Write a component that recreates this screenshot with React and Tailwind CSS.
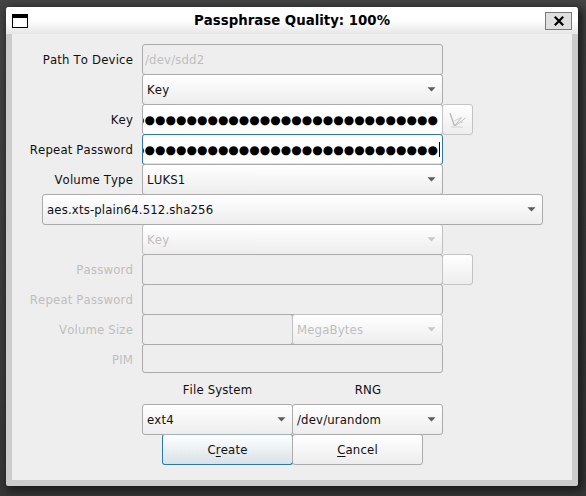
const FONT = "font-['DejaVu_Sans_Condensed','DejaVu_Sans',sans-serif] [font-kerning:none]";

const DOTS = '●'.repeat(29);

function Row({ label, muted, children }) {
  return (
    <div className="flex h-[30px]">
      <div className={`w-[121px] shrink-0 text-right leading-[31px] ${muted ? 'text-[#bebebe]' : ''}`}>{label}</div>
      <div className="ml-[9px] flex">{children}</div>
    </div>
  );
}

function Arrow({ muted }) {
  return (
    <svg width="9" height="5" viewBox="0 0 9 5" className="shrink-0" fill={muted ? '#c8c8c8' : '#5c5c5c'}>
      <path d="M0.5 0.3H8.5L4.5 4.6Z" />
    </svg>
  );
}

function Combo({ text, muted, className }) {
  return (
    <div
      className={`flex h-[31px] shrink-0 items-center justify-between rounded-[3px] border bg-linear-to-b from-white to-[#ededed] pr-[6px] pl-1 ${muted ? 'border-[#c0c0c0] text-[#bebebe]' : 'border-[#ababab]'} ${className}`}
    >
      <span className="leading-[29px]">{text}</span>
      <Arrow muted={muted} />
    </div>
  );
}

function Field({ children, className = 'w-[301px] h-[31px]' }) {
  return (
    <div className={`shrink-0 rounded-[3px] border border-[#ababab] bg-[#eeeeee] pl-[2px] leading-[29px] text-[#bebebe] ${className}`}>
      {children}
    </div>
  );
}

function Secret({ focused }) {
  return (
    <div
      className={`flex h-[31px] w-[301px] shrink-0 items-center justify-end overflow-hidden rounded-[3px] border bg-white ${focused ? 'border-[#2878a8] pr-[2px] shadow-[inset_0_-1px_0_#d3e4ee]' : 'border-[#ababab] pr-[3px]'}`}
    >
      <span className="pt-px pr-px font-['DejaVu_Sans'] text-[12px] leading-[29px] tracking-[0.01px] whitespace-nowrap text-black">{DOTS}</span>
      {focused && <span className="h-[15px] w-px shrink-0 bg-black" />}
    </div>
  );
}

function ToolButton({ children }) {
  return (
    <div className="-ml-px flex h-[31px] w-[31px] items-center justify-center rounded-[3px] border border-[#c4c4c4] bg-linear-to-b from-white to-[#ededed]">
      {children}
    </div>
  );
}

export default function App() {
  return (
    <div className={`h-[496px] w-[586px] overflow-hidden bg-linear-to-b from-[#444444] to-[#363636] pt-[7px] pl-[6px] text-[13px] tracking-[0.16px] text-[#101010] ${FONT}`}>
      <div className="flex h-[479px] w-[572px] flex-col rounded-t-[3px] rounded-b-[2px] bg-[#cccccc] shadow-[3px_3px_9px_2px_#1c1c1c]">
        <div className="flex h-[27px] shrink-0 items-center rounded-t-[3px] bg-linear-to-b from-white from-50% to-[#e6e6e6] px-[6px]">
          <div className="h-[14px] w-4 border border-t-4 border-black bg-white" />
          <div className="flex-1 pl-[11px] text-center font-['DejaVu_Sans'] text-[13.33px] leading-[27px] font-bold tracking-normal text-black">
            Passphrase Quality: 100%
          </div>
          <div className="mt-px flex h-[18px] w-[27px] items-center justify-center border border-[#787878] bg-[#e0e0e0]">
            <svg width="10" height="10" viewBox="0 0 10 10" stroke="#000" strokeWidth="2.2">
              <path d="M0.8 0.8L9.2 9.2M9.2 0.8L0.8 9.2" />
            </svg>
          </div>
        </div>

        <div className="mx-[6px] flex h-[446px] flex-col bg-[#eeeeee] pt-[10px]">
          <Row label="Path To Device">
            <Field>/dev/sdd2</Field>
          </Row>
          <Row label="">
            <Combo text="Key" className="w-[301px]" />
          </Row>
          <Row label="Key">
            <Secret />
            <ToolButton>
              <svg width="17" height="16" viewBox="0 0 17 16" fill="none">
                <path d="M1 1L5.5 14" stroke="#b6b6b6" strokeWidth="1.3" />
                <path d="M5.5 14L12.5 5.5M6 14L16.5 6" stroke="#bebebe" />
                <path d="M5.5 9L12 5.5M8.5 11.5L14 10" stroke="#d2d2d2" />
                <path d="M2 15H14" stroke="#d2d2d2" />
              </svg>
            </ToolButton>
          </Row>
          <Row label="Repeat Password">
            <Secret focused />
          </Row>
          <Row label="Volume Type">
            <Combo text="LUKS1" className="w-[301px]" />
          </Row>
          <div className="z-10 flex h-[30px] pl-[30px]">
            <Combo text="aes.xts-plain64.512.sha256" className="w-[501px]" />
          </div>
          <Row label="" muted>
            <Combo text="Key" muted className="w-[301px]" />
          </Row>
          <Row label="Password" muted>
            <Field />
            <ToolButton />
          </Row>
          <Row label="Repeat Password" muted>
            <Field />
          </Row>
          <Row label="Volume Size" muted>
            <Field className="h-[31px] w-[151px]" />
            <Combo text="MegaBytes" muted className="-ml-px w-[151px]" />
          </Row>
          <Row label="PIM" muted>
            <Field className="h-[29px] w-[301px]" />
          </Row>
          <div className="flex h-[30px] pl-[130px] text-center leading-[31px]">
            <div className="w-[151px]">File System</div>
            <div className="w-[150px]">RNG</div>
          </div>
          <div className="flex h-[30px] pl-[130px]">
            <Combo text="ext4" className="w-[151px]" />
            <Combo text="/dev/urandom" className="-ml-px w-[151px]" />
          </div>
          <div className="flex h-[31px] pl-[150px] text-center leading-[29px]">
            <div className="w-[131px] rounded-[3px] border border-[#2878a8] border-t-[#a0b4c0] bg-linear-to-b from-white to-[#d8e2e8]">
              C<span className="underline underline-offset-2">r</span>eate
            </div>
            <div className="-ml-px w-[131px] rounded-[3px] border border-[#ababab] bg-linear-to-b from-white to-[#ededed]">
              <span className="underline underline-offset-2">C</span>ancel
            </div>
          </div>
        </div>
      </div>
    </div>
  );
}
